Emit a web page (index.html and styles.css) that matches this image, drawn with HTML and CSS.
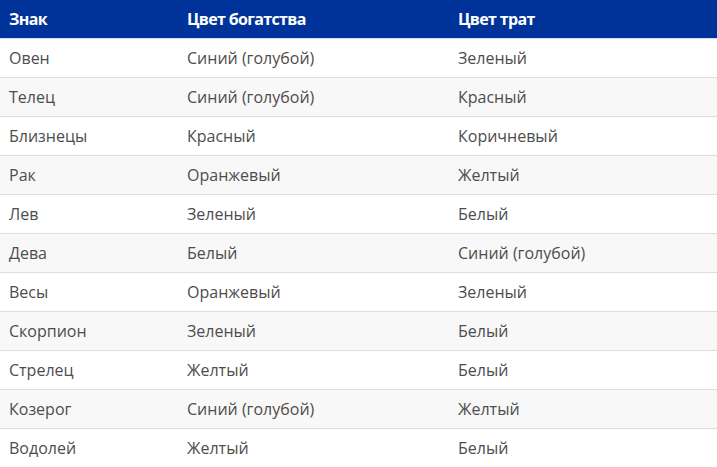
FILE: index.html
```html
<!DOCTYPE html>
<html lang="ru">
<head>
<meta charset="utf-8">
<link rel="stylesheet" href="styles.css">
</head>
<body>
<table class="zodiac">
  <thead>
    <tr><th class="c1">Знак</th><th class="c2">Цвет богатства</th><th class="c3">Цвет трат</th></tr>
  </thead>
  <tbody>
    <tr><td>Овен</td><td>Синий (голубой)</td><td>Зеленый</td></tr>
    <tr><td>Телец</td><td>Синий (голубой)</td><td>Красный</td></tr>
    <tr><td>Близнецы</td><td>Красный</td><td>Коричневый</td></tr>
    <tr><td>Рак</td><td>Оранжевый</td><td>Желтый</td></tr>
    <tr><td>Лев</td><td>Зеленый</td><td>Белый</td></tr>
    <tr><td>Дева</td><td>Белый</td><td>Синий (голубой)</td></tr>
    <tr><td>Весы</td><td>Оранжевый</td><td>Зеленый</td></tr>
    <tr><td>Скорпион</td><td>Зеленый</td><td>Белый</td></tr>
    <tr><td>Стрелец</td><td>Желтый</td><td>Белый</td></tr>
    <tr><td>Козерог</td><td>Синий (голубой)</td><td>Желтый</td></tr>
    <tr><td>Водолей</td><td>Желтый</td><td>Белый</td></tr>
  </tbody>
</table>
</body>
</html>
```
FILE: styles.css
```css
html, body {
  margin: 0;
  padding: 0;
  background: #ffffff;
}
.zodiac {
  width: 717px;
  border-collapse: collapse;
  table-layout: fixed;
  font-family: "Open Sans", "DejaVu Sans", sans-serif;
  font-size: 16px;
  color: #4d4d4d;
}
.zodiac th {
  background: #003399;
  color: #ffffff;
  font-weight: 700;
  font-size: 16px;
  text-align: left;
  height: 38px;
  padding: 0 0 0 9px;
  letter-spacing: -0.65px;
  border-bottom: 1px solid #cfe0ff;
}
.zodiac .c1 { width: 169px; }
.zodiac .c2 { width: 262px; }
.zodiac td {
  height: 38px;
  padding: 0 0 0 9px;
  border-top: 1px solid #dddddd;
  vertical-align: middle;
}
.zodiac tbody tr:first-child td { border-top: none; }
.zodiac tbody tr:nth-child(even) td { background: #f8f8f8; }
```
